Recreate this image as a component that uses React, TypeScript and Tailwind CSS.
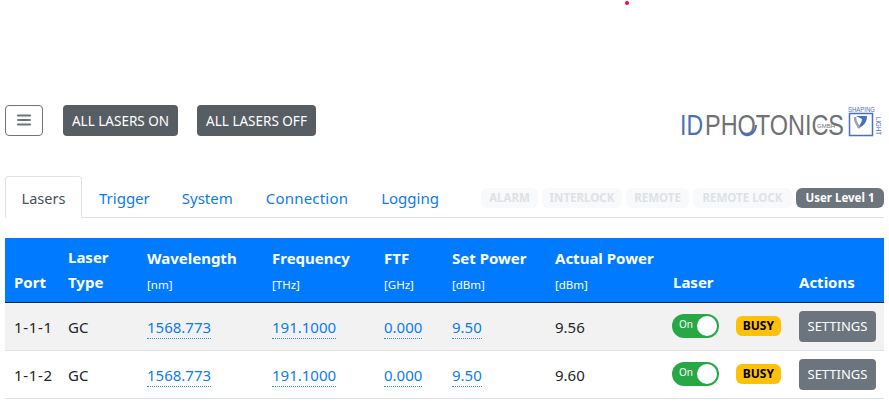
const rows = [
  { port: "1-1-1", power: "9.56", striped: true },
  { port: "1-1-2", power: "9.60", striped: false },
]

const flags = [
  { label: "ALARM", width: "w-[57px]" },
  { label: "INTERLOCK", width: "w-[80px]" },
  { label: "REMOTE", width: "w-[63px]" },
  { label: "REMOTE LOCK", width: "w-[99px]" },
]

function Logo() {
  return (
    <svg width="206" height="34" viewBox="0 0 206 34" className="block overflow-visible">
      <text x="2" y="32" fontFamily="'Liberation Sans', sans-serif" fontSize="29" fill="#4a6fbd" textLength="23" lengthAdjust="spacingAndGlyphs">ID</text>
      <text x="27" y="32" fontFamily="'Liberation Sans', sans-serif" fontSize="29" fill="#6f7174" textLength="139" lengthAdjust="spacingAndGlyphs">PHOTONICS</text>
      <path d="M63.5 29A8.5 10.5 0 0 0 78 22" fill="none" stroke="#4a6fbd" strokeWidth="2" />
      <text x="139" y="25" fontFamily="'Liberation Sans', sans-serif" fontSize="6" fill="#6f7174" textLength="18" lengthAdjust="spacingAndGlyphs">GMBH</text>
      <text x="170" y="8.5" fontFamily="'Liberation Sans', sans-serif" fontSize="7" fill="#4a6fbd" textLength="27" lengthAdjust="spacingAndGlyphs">SHAPING</text>
      <rect x="171.5" y="10.5" width="23" height="22" fill="#fff" stroke="#4a6fbd" strokeWidth="1.5" />
      <path d="M178 13h11c0 7-4 11-10 12 3-3 5-6 5-9z" fill="#4a6fbd" />
      <path d="M177 14c0 5 2 8 5 11" fill="none" stroke="#9aa0a6" strokeWidth="2.5" />
      <text x="0" y="0" transform="translate(197.5 14) rotate(90)" fontFamily="'Liberation Sans', sans-serif" fontSize="6.5" fill="#4a6fbd" textLength="18" lengthAdjust="spacingAndGlyphs">LIGHT</text>
    </svg>
  )
}

function Head({ title, unit, width }: { title: React.ReactNode; unit?: string; width: string }) {
  return (
    <th className={`${width} px-[9px] ${unit ? "pb-[8px]" : "pb-[7px]"} align-bottom text-left font-bold text-[15px] leading-[25px] text-white`}>
      {title}
      {unit && <div className="text-[11.5px] font-normal leading-[18px] pt-[5px]">{unit}</div>}
    </th>
  )
}

function Value({ children }: { children: React.ReactNode }) {
  return <span className="text-[#0d7bf0] border-b border-dotted border-[#1a9ad6] pb-[1px]">{children}</span>
}

export default function App() {
  return (
    <div className="relative w-[889px] h-[408px] overflow-hidden bg-white px-[5px] pt-[103px] text-[#212529] font-['Noto_Sans','Open_Sans',sans-serif]">
      <div className="absolute left-[625px] top-[1px] w-[4px] h-[4px] rounded-full bg-[#e8112d]" />

      <div className="flex items-center h-[34px]">
        <button className="w-[38px] h-[31px] rounded border border-[#6c757d] flex items-center justify-center">
          <svg width="14" height="12" viewBox="0 0 14 12">
            <path d="M1 1.5h12M1 6h12M1 10.5h12" stroke="#6c757d" strokeWidth="2" strokeLinecap="round" />
          </svg>
        </button>
        <button className="ml-[20px] w-[115px] h-[31px] pt-[2px] rounded bg-[#565e64] text-white text-[13.5px]">ALL LASERS ON</button>
        <button className="ml-[19px] w-[119px] h-[31px] pt-[2px] rounded bg-[#565e64] text-white text-[13.5px]">ALL LASERS OFF</button>
        <div className="ml-auto">
          <Logo />
        </div>
      </div>

      <div className="mt-[39px] flex items-end h-[42px] border-b border-[#dee2e6] w-[879px]">
        <div className="w-[77px] h-[42px] pt-[3px] -mb-px border border-[#dee2e6] border-b-white rounded-t bg-white flex items-center justify-center text-[#495057] text-[14.5px]">Lasers</div>
        <div className="ml-[17px] h-[41px] pt-[3px] flex items-center text-[#0d7bf0] text-[15px]">Trigger</div>
        <div className="ml-[32px] h-[41px] pt-[3px] flex items-center text-[#0d7bf0] text-[15px]">System</div>
        <div className="ml-[33px] h-[41px] pt-[3px] flex items-center text-[#0d7bf0] text-[15px] tracking-[0.2px]">Connection</div>
        <div className="ml-[33px] h-[41px] pt-[3px] flex items-center text-[#0d7bf0] text-[15px]">Logging</div>
        <div className="ml-auto h-[41px] flex items-center gap-[4px] pt-[3px]">
          {flags.map((f) => (
            <span key={f.label} className={`${f.width} h-[20px] rounded-md bg-[#f8f9fa] text-[#dee2e6] text-[11.5px] font-bold flex items-center justify-center`}>{f.label}</span>
          ))}
          <span className="w-[88px] h-[20px] rounded-md bg-[#6c757d] text-white text-[11.5px] font-bold flex items-center justify-center">User Level 1</span>
        </div>
      </div>

      <table className="mt-[20px] w-[879px] table-fixed border-collapse text-[15px]">
        <thead>
          <tr className="bg-[#007bff] h-[64px] border-b border-[#212529]">
            <Head width="w-[54px]" title="Port" />
            <Head width="w-[79px]" title={<>Laser<br />Type</>} />
            <Head width="w-[125px]" title="Wavelength" unit="[nm]" />
            <Head width="w-[112px]" title="Frequency" unit="[THz]" />
            <Head width="w-[68px]" title="FTF" unit="[GHz]" />
            <Head width="w-[103px]" title="Set Power" unit="[dBm]" />
            <Head width="w-[118px]" title="Actual Power" unit="[dBm]" />
            <Head width="w-[126px]" title="Laser" />
            <Head width="w-[94px]" title="Actions" />
          </tr>
        </thead>
        <tbody>
          {rows.map((r) => (
            <tr key={r.port} className={`h-[48px] border-b border-[#dee2e6] ${r.striped ? "bg-[#f2f2f2]" : "bg-white"}`}>
              <td className="pl-[9px] pt-[2px] whitespace-nowrap tracking-[0.7px]">{r.port}</td>
              <td className="px-[9px] pt-[2px]">GC</td>
              <td className="px-[9px] pt-[2px]"><Value>1568.773</Value></td>
              <td className="px-[9px] pt-[2px]"><Value>191.1000</Value></td>
              <td className="px-[9px] pt-[2px]"><Value>0.000</Value></td>
              <td className="px-[9px] pt-[2px]"><Value>9.50</Value></td>
              <td className="px-[9px] pt-[2px]">{r.power}</td>
              <td className="px-[9px]">
                <div className="flex items-center">
                  <div className="w-[48px] h-[24px] -ml-px rounded-full bg-[#28a745] flex items-center justify-between pl-[7px] pr-[2px]">
                    <span className="text-white text-[10px] pb-[3px]">On</span>
                    <span className="w-[20px] h-[20px] rounded-full bg-white" />
                  </div>
                  <span className="ml-[17px] w-[47px] h-[20px] rounded-md bg-[#ffc107] text-black text-[12px] font-bold flex items-center justify-center">BUSY</span>
                </div>
              </td>
              <td className="px-[9px]">
                <button className="w-[77px] h-[31px] pt-[2px] rounded bg-[#6c757d] text-white text-[13px]">SETTINGS</button>
              </td>
            </tr>
          ))}
        </tbody>
      </table>
    </div>
  )
}
